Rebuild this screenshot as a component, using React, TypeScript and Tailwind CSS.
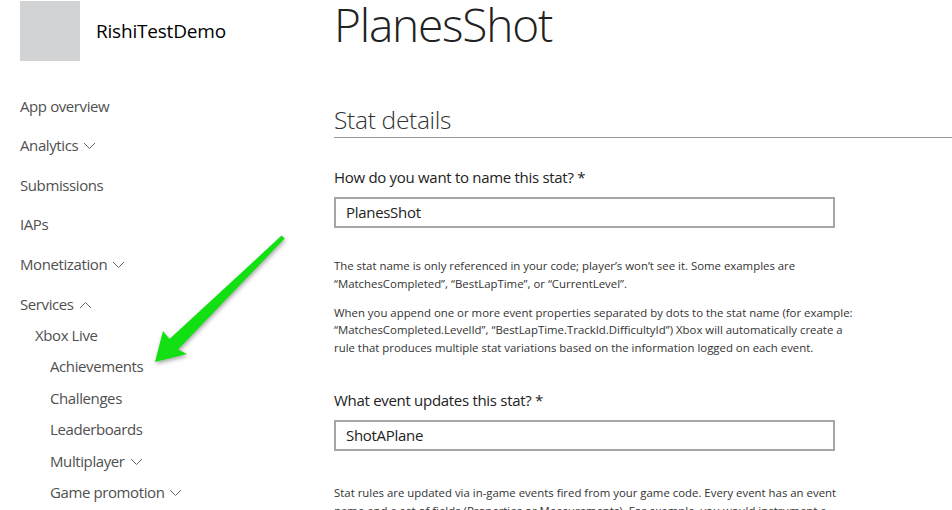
const font = "font-['Open_Sans','Noto_Sans',sans-serif]";

const Chevron = ({ up = false }: { up?: boolean }) => (
  <svg width="13" height="8" viewBox="0 0 13 8" className="ml-[5px] mt-[2px] text-[#666]">
    <polyline
      points={up ? "1,7 6.5,1.5 12,7" : "1,1 6.5,6.5 12,1"}
      fill="none"
      stroke="currentColor"
      strokeWidth="1"
    />
  </svg>
);

const NavItem = ({ label, chevron, indent = 0, small = false }: { label: string; chevron?: "up" | "down"; indent?: number; small?: boolean }) => (
  <div
    className={`flex items-center text-[15px] tracking-[-0.4px] text-[#505050] ${small ? "h-[31.4px]" : "h-[39.6px]"} ${indent === 1 ? "pl-[15px]" : indent === 2 ? "pl-[30px]" : ""}`}
  >
    <span>{label}</span>
    {chevron && <Chevron up={chevron === "up"} />}
  </div>
);

const Sidebar = () => {
  return (
    <aside className="w-[334px] shrink-0 pl-5">
      <div className="flex items-center gap-4 pt-px">
        <div className="w-[60px] h-[60px] bg-[#d2d3d5]" />
        <span className="text-[19px] tracking-[-0.2px] text-black">RishiTestDemo</span>
      </div>

      <nav className="mt-[25px]">
        <NavItem label="App overview" />
        <NavItem label="Analytics" chevron="down" />
        <NavItem label="Submissions" />
        <NavItem label="IAPs" />
        <NavItem label="Monetization" chevron="down" />
        <NavItem label="Services" chevron="up" />
        <div className="-mt-[4px]">
          <NavItem label="Xbox Live" indent={1} small />
          <NavItem label="Achievements" indent={2} small />
          <NavItem label="Challenges" indent={2} small />
          <NavItem label="Leaderboards" indent={2} small />
          <NavItem label="Multiplayer" chevron="down" indent={2} small />
          <NavItem label="Game promotion" chevron="down" indent={2} small />
        </div>
      </nav>
    </aside>
  );
};

const Field = ({ value }: { value: string }) => (
  <div className="mt-[10px] w-[501px] h-[31px] border-2 border-[#a6a6a6] flex items-center pl-[10px] text-[15px] tracking-[-0.3px] text-[#222]">
    {value}
  </div>
);

const Arrow = () => (
  <svg
    width="160"
    height="150"
    viewBox="0 0 160 150"
    className="absolute left-[140px] top-[225px] drop-shadow-[1px_2px_2px_rgba(0,0,0,0.35)]"
  >
    <polygon
      points="15,137 23,106 29.5,114 141.6,10.6 144.6,13.6 38,124.5 47,129"
      fill="#12e012"
      strokeLinejoin="round"
    />
  </svg>
);

export default function App() {
  return (
    <div className={`relative w-[952px] h-[510px] overflow-hidden bg-white flex ${font}`}>
      <Sidebar />

      <main className="flex-1">
        <h1 className="-mt-[6px] text-[46px] leading-[60px] tracking-[-1.2px] font-light text-[#222]">PlanesShot</h1>

        <h2 className="mt-[49px] text-[24.5px] leading-[34px] tracking-[-0.3px] font-light text-[#333] border-b border-[#999]">
          Stat details
        </h2>

        <div className="mt-[29px] text-[15px] leading-[20px] tracking-[-0.3px] text-[#222]">
          How do you want to name this stat? *
        </div>
        <Field value="PlanesShot" />

        <div className="text-[11.4px] leading-[17.5px] text-[#333]">
          <p className="mt-[29px]">
            The stat name is only referenced in your code; player’s won’t see it. Some examples are
            <br />
            “MatchesCompleted”, “BestLapTime”, or “CurrentLevel”.
          </p>
          <p className="mt-[11.5px]">
            When you append one or more event properties separated by dots to the stat name (for example:
            <br />
            “MatchesCompleted.LevelId”, “BestLapTime.TrackId.DifficultyId”) Xbox will automatically create a
            <br />
            rule that produces multiple stat variations based on the information logged on each event.
          </p>
        </div>

        <div className="mt-[34px] text-[15px] leading-[20px] tracking-[-0.3px] text-[#222]">
          What event updates this stat? *
        </div>
        <Field value="ShotAPlane" />

        <p className="mt-[33px] text-[11.4px] leading-[17.5px] text-[#333]">
          Stat rules are updated via in-game events fired from your game code. Every event has an event
          <br />
          name and a set of fields (Properties or Measurements). For example, you would instrument a
        </p>
      </main>

      <Arrow />
    </div>
  );
}
